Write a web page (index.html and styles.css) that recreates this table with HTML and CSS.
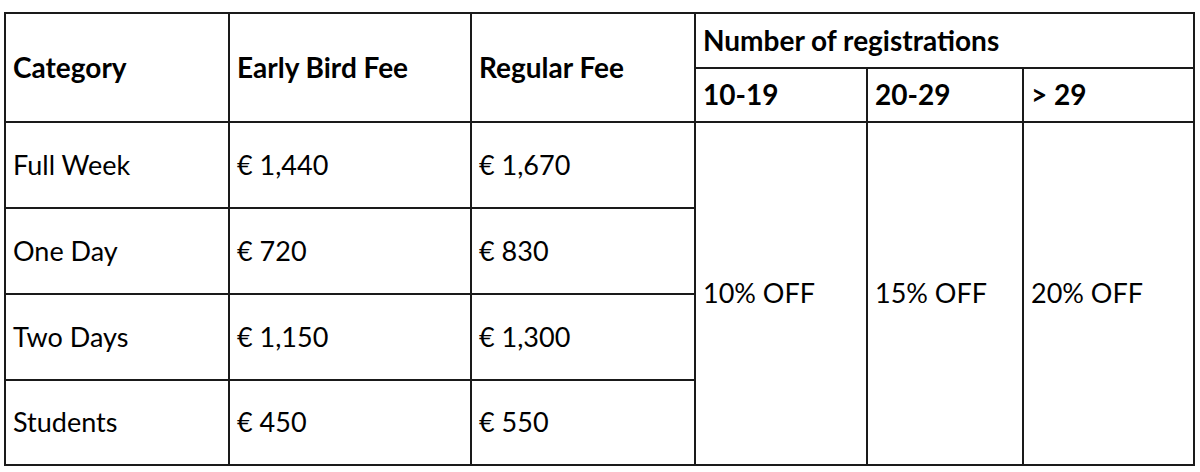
FILE: index.html
```html
<!DOCTYPE html>
<html lang="en">
<head>
<meta charset="utf-8">
<title>Fees</title>
<link rel="stylesheet" href="styles.css">
</head>
<body>
<table class="fees">
  <colgroup>
    <col class="c1"><col class="c2"><col class="c3"><col class="c4"><col class="c5"><col class="c6">
  </colgroup>
  <thead>
    <tr class="h1">
      <th rowspan="2">Category</th>
      <th rowspan="2">Early Bird Fee</th>
      <th rowspan="2">Regular Fee</th>
      <th colspan="3">Number of registrations</th>
    </tr>
    <tr class="h2">
      <th>10-19</th>
      <th>20-29</th>
      <th>&gt; 29</th>
    </tr>
  </thead>
  <tbody>
    <tr class="r">
      <td>Full Week</td><td>€ 1,440</td><td>€ 1,670</td>
      <td rowspan="4">10% OFF</td><td rowspan="4">15% OFF</td><td rowspan="4">20% OFF</td>
    </tr>
    <tr class="r"><td>One Day</td><td>€ 720</td><td>€ 830</td></tr>
    <tr class="r"><td>Two Days</td><td>€ 1,150</td><td>€ 1,300</td></tr>
    <tr class="r"><td>Students</td><td>€ 450</td><td>€ 550</td></tr>
  </tbody>
</table>
</body>
</html>
```
FILE: styles.css
```css
html, body {
  margin: 0;
  padding: 0;
  background: #ffffff;
}
body {
  padding: 12px 0 0 4px;
  font-family: "Lato", "Liberation Sans", sans-serif;
  color: #000;
}
.fees {
  border-collapse: collapse;
  table-layout: fixed;
  width: 1191px;
}
.c1 { width: 224px; }
.c2 { width: 242px; }
.c3 { width: 224px; }
.c4 { width: 172px; }
.c5 { width: 156px; }
.c6 { width: 171px; }
.fees th, .fees td {
  border: 2px solid #1a1a1a;
  padding: 0 0 0 7px;
  text-align: left;
  vertical-align: middle;
  font-size: 27px;
  line-height: 1.2;
  white-space: nowrap;
}
.fees th {
  font-weight: 700;
  font-size: 28px;
}
.h1 { height: 55px; }
.h2 { height: 54px; }
.r { height: 86px; }
.fees tbody tr:last-child { height: 85px; }
```
